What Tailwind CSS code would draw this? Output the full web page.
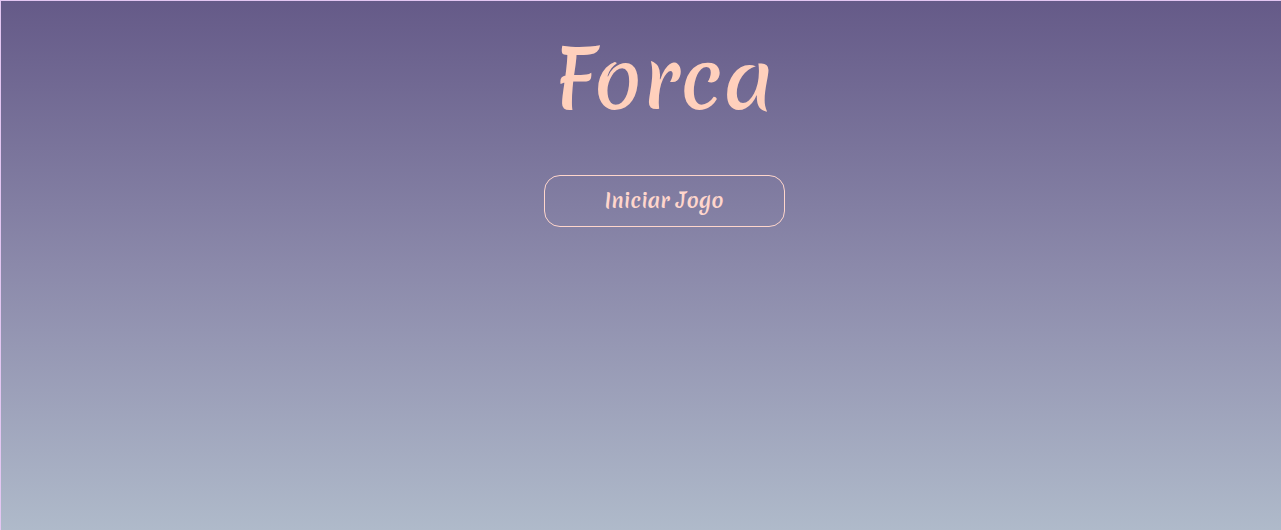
<!DOCTYPE html>
<html lang="pt-BR">
<head>
<meta charset="utf-8">
<meta name="viewport" content="width=device-width, initial-scale=1">
<title>Forca</title>
<script src="https://cdn.jsdelivr.net/npm/@tailwindcss/browser@4"></script>
</head>
<body class="min-h-screen border-t border-l border-[#e3c6f2] bg-linear-to-b from-[#655a88] via-[#8b89aa] to-[#afbaca] text-[#ffd0bc] font-['Merienda','Lato',cursive]">
<main class="flex flex-col items-center pt-[26px] pl-[46px]">
<h1 class="text-[80px] leading-[104px] font-medium">Forca</h1>
<button type="button" class="mt-11 h-[52px] w-[241px] rounded-2xl border border-[#ffd6cc] text-xl font-bold text-[#ffd6cc]">Iniciar Jogo</button>
</main>
</body>
</html>
